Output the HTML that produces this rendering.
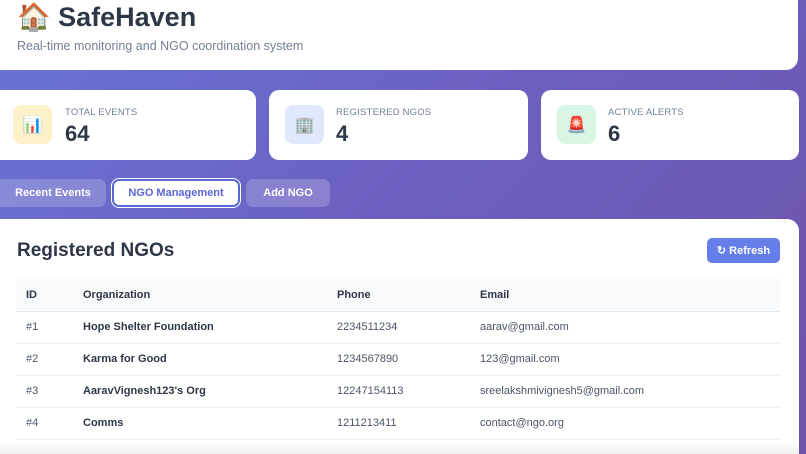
<!DOCTYPE html>
<html><head><meta charset="utf-8"><style>
*{box-sizing:border-box;margin:0;padding:0}
html,body{width:806px;height:454px;overflow:hidden}
body{font-family:"Liberation Sans",sans-serif;background:linear-gradient(135deg,#6a74d6 0%,#6b5fbf 50%,#6f52a8 100%);position:relative;color:#2d3748}
.top{position:absolute;left:-10px;top:-20px;width:808px;height:90px;background:#fff;border-radius:12px}
.title{position:absolute;left:17px;top:1px;font-size:27px;font-weight:bold;color:#2d3748}
.sub{position:absolute;left:17px;top:39px;font-size:12.5px;color:#718096}
.card{position:absolute;top:90px;height:70px;background:#fff;border-radius:10px}
.ic{position:absolute;left:13px;top:15px;width:39px;height:39px;border-radius:8px;font-size:16px;display:flex;align-items:center;justify-content:center}
.lab{position:absolute;left:65px;top:17px;font-size:9.5px;color:#718096;letter-spacing:.2px}
.val{position:absolute;left:65px;top:31px;font-size:22px;font-weight:bold;color:#2d3748}
.tab{position:absolute;top:179px;height:28px;border-radius:7px;font-size:11px;font-weight:bold;color:#fff;display:flex;align-items:center;justify-content:center;background:rgba(255,255,255,.2)}
.main{position:absolute;left:-10px;top:219px;width:809px;height:235px;background:#fff;border-radius:12px 12px 0 0}
.fade{position:absolute;left:0;top:442px;width:799px;height:12px;background:linear-gradient(#fff,#f0f0f2)}
h2{position:absolute;left:17px;top:240px;font-size:19px;font-weight:bold;color:#2d3748}
.btn{position:absolute;left:707px;top:238px;width:73px;height:25px;background:#667eea;border-radius:5px;color:#fff;font-size:11px;font-weight:bold;display:flex;align-items:center;justify-content:center}
table{position:absolute;left:16px;top:279px;width:764px;border-collapse:collapse;font-size:11px}
th{background:#f8f9fa;text-align:left;font-weight:bold;color:#2d3748;height:32px;border-bottom:1px solid #e2e8f0}
td{height:32px;border-bottom:1px solid #edf0f3;color:#4a5568}
td:nth-child(2){font-weight:bold;color:#2d3748}
th:first-child,td:first-child{padding-left:10px;width:67px}
.c2{width:254px}.c3{width:143px}
</style></head><body>
<div class="top"></div>
<div class="title">🏠 SafeHaven</div>
<div class="sub">Real-time monitoring and NGO coordination system</div>

<div class="card" style="left:-10px;width:266px"><div class="ic" style="left:23px;background:#fdf1c9">📊</div><div class="lab" style="left:75px">TOTAL EVENTS</div><div class="val" style="left:75px">64</div></div>
<div class="card" style="left:269px;width:259px"><div class="ic" style="left:16px;background:#dfe9fb">🏢</div><div class="lab" style="left:67px">REGISTERED NGOS</div><div class="val" style="left:67px">4</div></div>
<div class="card" style="left:541px;width:258px"><div class="ic" style="left:16px;background:#d9f6e4">🚨</div><div class="lab" style="left:67px">ACTIVE ALERTS</div><div class="val" style="left:67px">6</div></div>

<div class="tab" style="left:-10px;width:116px;padding-left:10px">Recent Events</div>
<div class="tab" style="left:112px;width:128px;background:#fff;color:#5a67d8;border:2px solid #5a67d8;box-shadow:0 0 0 1px #fff">NGO Management</div>
<div class="tab" style="left:246px;width:84px">Add NGO</div>

<div class="main"></div>
<div class="fade"></div>
<h2>Registered NGOs</h2>
<div class="btn">↻ Refresh</div>
<table>
<tr><th>ID</th><th class="c2">Organization</th><th class="c3">Phone</th><th>Email</th></tr>
<tr><td>#1</td><td>Hope Shelter Foundation</td><td>2234511234</td><td>aarav@gmail.com</td></tr>
<tr><td>#2</td><td>Karma for Good</td><td>1234567890</td><td>123@gmail.com</td></tr>
<tr><td>#3</td><td>AaravVignesh123's Org</td><td>12247154113</td><td>sreelakshmivignesh5@gmail.com</td></tr>
<tr><td>#4</td><td>Comms</td><td>1211213411</td><td>contact@ngo.org</td></tr>
</table>
</body></html>
